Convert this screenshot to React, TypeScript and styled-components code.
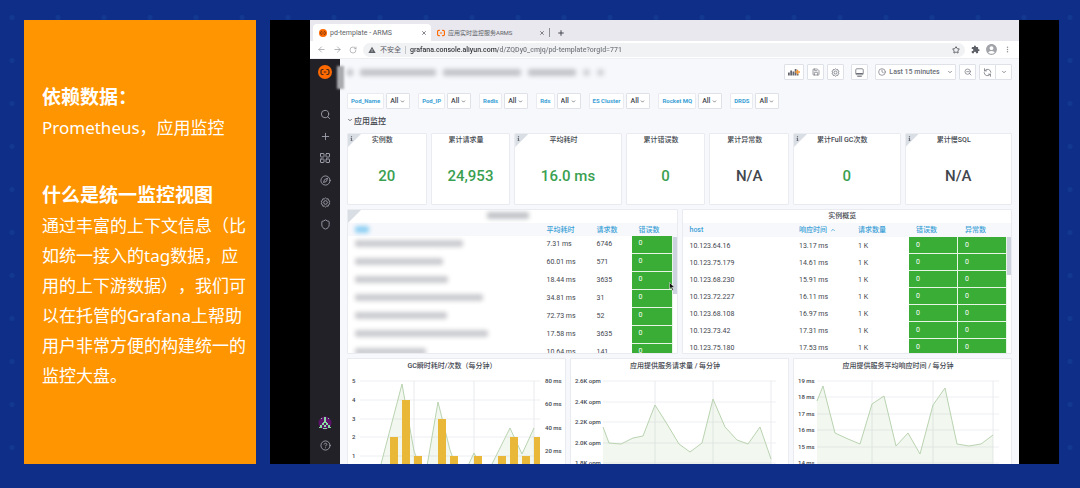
import React from "react";
import styled, { createGlobalStyle } from "styled-components";
import {
  ArrowLeft,
  ArrowRight,
  ChevronDown,
  ChevronUp,
  CircleHelp,
  Clock,
  Compass,
  LayoutGrid,
  Plus,
  RotateCw,
  Save,
  Search,
  Shield,
  Star,
  X,
  ZoomOut,
} from "lucide-react";
import { MdAccountCircle, MdExtension, MdMoreVert, MdWarning } from "react-icons/md";
import { FaInfo } from "react-icons/fa";

const sans = `Roboto, "Noto Sans CJK SC", sans-serif`;
const color = {
  navy: "#0f2e87",
  orange: "#ff9500",
  brand: "#ff6a00",
  ink: "#42464e",
  blue: "#3a9fd6",
  green: "#3aad37",
  stat: "#3a9f50",
  edge: "#e9ebf1",
  canvas: "#f7f8fc",
  side: "#222127",
};

const GlobalStyle = createGlobalStyle`
  *, *::before, *::after { box-sizing: border-box; }
  body { margin: 0; background: ${color.navy}; }
  button, input, select { font: inherit; color: inherit; margin: 0; }
  svg { display: block; flex: none; }
`;

const Page = styled.main`
  display: grid;
  grid-template-columns: 232px minmax(0, 1fr);
  gap: 14px;
  min-height: 100vh;
  padding: 20px 21px 24px 24px;
  background-color: ${color.navy};
  background-image: radial-gradient(circle at center, #12398f 0 2px, transparent 3px);
  background-size: 46px 43px;
  background-position: -11px -4px;
  font-family: ${sans};
`;

/* ---------- left note ---------- */

const Note = styled.aside`
  padding: 62px 6px 0 18px;
  background: ${color.orange};
  color: #fff;
  font-family: "Noto Sans", "Noto Sans CJK SC", sans-serif;
  text-spacing-trim: space-all;
`;

const NoteBlock = styled.section`
  & + & {
    margin-top: 37px;
  }
`;

const NoteTitle = styled.h2`
  margin: 0 0 1px;
  font-size: 19px;
  line-height: 30px;
  font-weight: 700;
`;

const NoteText = styled.p`
  margin: 0;
  font-size: 17px;
  line-height: 30px;
  font-weight: 400;
`;

/* ---------- browser ---------- */

const Stage = styled.section`
  padding: 0 40px;
  background: #000;
  overflow: hidden;
`;

const Browser = styled.div`
  display: flex;
  flex-direction: column;
  height: 100%;
  background: ${color.canvas};
  color: ${color.ink};
`;

const TabStrip = styled.div`
  display: flex;
  align-items: flex-end;
  height: 21px;
  padding-left: 3px;
  background: #e9e8ee;
`;

const Tab = styled.div<{ $active?: boolean }>`
  display: flex;
  align-items: center;
  gap: 3px;
  width: 118px;
  height: 17px;
  padding: 0 4px 0 6px;
  border-radius: 4px 4px 0 0;
  background: ${(p) => (p.$active ? "#fff" : "transparent")};
  color: #5c5f66;
`;

const TabLabel = styled.span<{ $large?: boolean }>`
  flex: 1;
  font-size: ${(p) => (p.$large ? 7 : 6)}px;
  white-space: nowrap;
`;

const Bare = styled.button`
  display: flex;
  align-items: center;
  justify-content: center;
  padding: 0;
  border: 0;
  background: none;
  cursor: pointer;
`;

const TabDivider = styled.span`
  align-self: center;
  width: 1px;
  height: 9px;
  margin-top: 4px;
  background: #8d8f96;
`;

const NewTab = styled(Bare)`
  width: 22px;
  height: 17px;
`;

const AddressRow = styled.div`
  display: flex;
  align-items: center;
  height: 18px;
  padding: 0 7px;
  background: #fff;
  border-bottom: 1px solid #eceef2;
`;

const NavButtons = styled.div`
  display: flex;
  gap: 7px;
  width: 46px;
  color: #9b9da2;
`;

const Omnibox = styled.div`
  display: flex;
  align-items: center;
  flex: 1;
  height: 14px;
  padding: 0 5px;
  border-radius: 7px;
  background: #f1f2f4;
  font-size: 7px;
  color: #5d6066;
`;

const Insecure = styled.span`
  display: flex;
  align-items: center;
  gap: 4px;
  padding-right: 4px;
  margin-right: 4px;
  border-right: 1px solid #c3c5ca;
  line-height: 8px;
`;

const UrlInput = styled.input`
  flex: 1;
  min-width: 0;
  padding: 0;
  border: 0;
  outline: 0;
  background: linear-gradient(90deg, #2f3135 88px, #74777d 88px);
  background-clip: text;
  -webkit-background-clip: text;
  -webkit-text-fill-color: transparent;
  font-weight: 500;
`;

const BrowserActions = styled.div`
  display: flex;
  align-items: center;
  gap: 5px;
  padding-left: 6px;
  color: #5d6066;
`;

/* ---------- dashboard shell ---------- */

const Dashboard = styled.div`
  display: flex;
  flex: 1;
  min-height: 0;
`;

const Sidebar = styled.nav`
  display: flex;
  flex-direction: column;
  align-items: center;
  width: 30px;
  padding: 6px 0 8px;
  background: ${color.side};
  color: #9d9fab;
`;

const SideGroup = styled.div<{ $push?: boolean }>`
  display: flex;
  flex-direction: column;
  margin-top: ${(p) => (p.$push ? "auto" : "24px")};
`;

const SideButton = styled(Bare)`
  width: 30px;
  height: 22px;
`;

const Main = styled.div`
  position: relative;
  flex: 1;
  min-width: 0;
  padding: 5px 7px 0;
`;

const Toolbar = styled.header`
  display: flex;
  align-items: center;
  height: 16px;
  margin-bottom: 13px;
`;

const Crumbs = styled.div`
  display: flex;
  align-items: center;
  gap: 7px;
  flex: 1;
`;

const Smudge = styled.span<{ $w: number; $tone?: string; $h?: number }>`
  display: block;
  width: ${(p) => p.$w}px;
  height: ${(p) => p.$h ?? 7}px;
  border-radius: 2px;
  background: ${(p) => p.$tone ?? "#c2c4c9"};
  filter: blur(2px);
`;

const EdgeSmudge = styled.span`
  position: absolute;
  left: -3px;
  top: 7px;
  width: 7px;
  height: 23px;
  background: #a9aaae;
  filter: blur(1px);
`;

const ToolGroup = styled.div`
  display: flex;
  gap: 3px;
`;

const ToolButton = styled(Bare)<{ $w?: number; $gap?: boolean; $joined?: boolean }>`
  gap: 3px;
  width: ${(p) => p.$w ?? 17}px;
  height: 16px;
  margin-left: ${(p) => (p.$gap ? 4 : p.$joined ? -4 : 0)}px;
  border: 1px solid #dfe1e8;
  border-radius: 1px;
  background: #fff;
  color: #6b6e76;
  font-size: 7px;
  font-weight: 500;
  white-space: nowrap;
`;

const ButtonText = styled.span`
  margin-right: 4px;
`;

const Variables = styled.div`
  display: flex;
  gap: 8px;
`;

const Variable = styled.label`
  display: flex;
  gap: 2px;
  height: 16px;
`;

const VariableName = styled.span`
  display: flex;
  align-items: center;
  padding: 0 3px 2px;
  border: 1px solid ${color.edge};
  border-radius: 1px;
  background: #fff;
  color: ${color.blue};
  font-size: 6px;
  font-weight: 700;
  white-space: nowrap;
`;

const Picker = styled.span`
  display: grid;
  align-items: center;
  width: 24px;
  border: 1px solid #dfe1e8;
  border-radius: 1px;
  background: #fff;

  & > * {
    grid-area: 1 / 1;
  }

  & > svg {
    justify-self: end;
    margin-right: 4px;
    pointer-events: none;
  }
`;

const Select = styled.select`
  appearance: none;
  width: 100%;
  height: 14px;
  padding: 0 0 0 3px;
  border: 0;
  background: transparent;
  font-size: 7px;
  font-weight: 500;
`;

const SectionToggle = styled(Bare)`
  gap: 1px;
  height: 24px;
  padding-bottom: 2px;
  font-size: 8px;
  font-weight: 500;
`;

const Board = styled.div`
  display: grid;
  grid-template-columns: repeat(24, minmax(0, 1fr));
  gap: 4px;
`;

const Panel = styled.section<{ $span: number; $h: number; $open?: boolean }>`
  position: relative;
  display: flex;
  flex-direction: column;
  grid-column: span ${(p) => p.$span};
  height: ${(p) => p.$h}px;
  border: 1px solid ${color.edge};
  border-bottom-width: ${(p) => (p.$open ? 0 : 1)}px;
  border-radius: 1px;
  background: #fff;
  overflow: hidden;
`;

const PanelTitle = styled.h3<{ $h?: number }>`
  display: flex;
  align-items: center;
  justify-content: center;
  flex: none;
  height: ${(p) => p.$h ?? 13}px;
  margin: 0;
  padding: 0 9px 2px 0;
  font-size: 7px;
  line-height: 8px;
  font-weight: 500;
  white-space: nowrap;
`;

const Corner = styled.span`
  position: absolute;
  left: 0;
  top: 0;
  width: 13px;
  height: 13px;
  padding: 2px 0 0 1px;
  background: #d9dee5;
  color: #6b6e76;
  clip-path: polygon(0 0, 100% 0, 0 100%);
`;

const StatValue = styled.div<{ $muted?: boolean }>`
  display: flex;
  align-items: center;
  justify-content: center;
  flex: 1;
  color: ${(p) => (p.$muted ? color.ink : color.stat)};
  font-size: 15px;
  font-weight: 500;
`;

const TableArea = styled.div`
  display: flex;
`;

const DataTable = styled.table<{ $row: number; $head: number; $lift?: number }>`
  flex: 1;
  min-width: 0;
  table-layout: fixed;
  border-collapse: separate;
  border-spacing: 0;
  font-size: 7px;
  line-height: 8px;

  th,
  td {
    padding: 0 0 0 7px;
    text-align: left;
    white-space: nowrap;
  }

  th {
    height: ${(p) => p.$head}px;
    background: ${color.canvas};
    color: ${color.blue};
    font-weight: 500;
  }

  td {
    height: ${(p) => p.$row}px;
    padding-bottom: ${(p) => p.$lift ?? 0}px;
  }
`;

const GreenCell = styled.td`
  border-bottom: 1px solid #e6f5e5;
  border-right: 1px solid #e6f5e5;
  background: ${color.green};
  color: #fff;
`;

const HeadLabel = styled.span`
  display: flex;
  align-items: center;
  gap: 3px;
`;

const Track = styled.div<{ $head: number }>`
  width: 4px;
  border-top: ${(p) => p.$head}px solid ${color.canvas};
`;

const Thumb = styled.div<{ $h: number }>`
  height: ${(p) => p.$h}px;
  background: #cdd2df;
`;

const Pointer = styled.svg`
  position: absolute;
  right: 2px;
  top: 72px;
`;

const ChartSvg = styled.svg`
  width: 100%;
  height: 90px;
  font-family: ${sans};
  font-size: 6px;
  font-weight: 500;
  fill: ${color.ink};
`;

/* ---------- drawings ---------- */

function BracketMark({ size, disc }: { size: number; disc?: boolean }) {
  const ink = disc ? "#3a2418" : color.brand;
  return (
    <svg width={size} height={size} viewBox="0 0 28 28" fill="none" stroke={ink} strokeWidth={disc ? 2.4 : 4}>
      {disc && <circle cx="14" cy="14" r="14" fill={color.brand} stroke="none" />}
      {disc ? (
        <path d="M11 9H9Q6 9 6 12V16Q6 19 9 19H11M17 9H19Q22 9 22 12V16Q22 19 19 19H17M11.500 14H16.500" />
      ) : (
        <path d="M10 5H6Q2 5 2 9V19Q2 23 6 23H10M18 5H22Q26 5 26 9V19Q26 23 22 23H18M10 14H18" />
      )}
    </svg>
  );
}

function GearIcon({ size }: { size: number }) {
  return (
    <svg width={size} height={size} viewBox="0 0 24 24" fill="none" stroke="currentColor" strokeWidth="2">
      <path
        strokeLinejoin="round"
        d="M9.500 4.200 12 2l2.500 2.200 3.300-.3.700 3.300 2.900 1.700L20 12l1.400 3.100-2.900 1.700-.7 3.300-3.300-.3L12 22l-2.500-2.200-3.300.3-.7-3.300-2.900-1.700L4 12 2.600 8.900l2.900-1.700.7-3.300z"
      />
      <circle cx="12" cy="12" r="4" />
    </svg>
  );
}

function AddPanelIcon() {
  return (
    <svg width="12" height="8" viewBox="0 0 24 16">
      <path fill="#63666e" d="M0 9h3.500v6H0zM4.500 5H8v10H4.500zM9 7h3.500v8H9zM13.500 2H17v13h-3.500zM18 11h3v4h-3z" />
      <path fill="#f59a3c" d="M17.500 3.500h3V6.500H24v3h-3.500V12.500h-3V9.500H14.500v-3h3z" />
    </svg>
  );
}

function DisplayIcon() {
  return (
    <svg width="9" height="9" viewBox="0 0 24 24" fill="none" stroke="currentColor" strokeWidth="2">
      <rect x="2" y="2" width="20" height="16" rx="3" />
      <path d="M3 14.500H21M6 22H18" strokeWidth="3" />
    </svg>
  );
}

function SyncIcon() {
  return (
    <svg width="9" height="9" viewBox="0 0 24 24" fill="none" stroke="currentColor" strokeWidth="2" strokeLinecap="round" strokeLinejoin="round">
      <path d="M4 2v5.500h5.500M4.500 7.500A9 9 0 0 1 21 11.500M20 22v-5.500h-5.500M19.500 16.500A9 9 0 0 1 3 12.500" />
    </svg>
  );
}

function AvatarIcon() {
  return (
    <svg width="14" height="14" viewBox="0 0 14 14">
      <circle cx="7" cy="7" r="6.500" fill="#5f1269" />
      <path
        fill="#86dca0"
        d="M6 1h2v5H6zM3 2h1v1H3zM10 2h1v1h-1zM5 6h4v1H5zM4 7h2v2H4zM8 7h2v2H8zM2 9h2v2H2zM10 9h2v2h-2zM6 9h2v2H6zM1 11h3v1H1zM10 11h3v1h-3zM5 12h4v1H5z"
      />
    </svg>
  );
}

/* ---------- data ---------- */

const variables = ["Pod_Name", "Pod_IP", "Redis", "Rds", "ES Cluster", "Rocket MQ", "DRDS"];

const stats = [
  { title: "实例数", value: "20", span: 3, info: true },
  { title: "累计请求量", value: "24,953", span: 3 },
  { title: "平均耗时", value: "16.0 ms", span: 4, info: true },
  { title: "累计错误数", value: "0", span: 3 },
  { title: "累计异常数", value: "N/A", span: 3 },
  { title: "累计Full GC次数", value: "0", span: 4, info: true },
  { title: "累计慢SQL", value: "N/A", span: 4, info: true },
];

const services = [
  { name: 108, cost: "7.31 ms", count: "6746" },
  { name: 88, cost: "60.01 ms", count: "571" },
  { name: 93, cost: "18.44 ms", count: "3635" },
  { name: 128, cost: "34.81 ms", count: "31" },
  { name: 92, cost: "72.73 ms", count: "52" },
  { name: 133, cost: "17.58 ms", count: "3635" },
  { name: 71, cost: "10.64 ms", count: "141" },
];

const hosts = [
  ["10.123.64.16", "13.17 ms"],
  ["10.123.75.179", "14.61 ms"],
  ["10.123.68.230", "15.91 ms"],
  ["10.123.72.227", "16.11 ms"],
  ["10.123.68.108", "16.97 ms"],
  ["10.123.73.42", "17.31 ms"],
  ["10.123.75.180", "17.53 ms"],
];

type Tick = [number, string];

interface ChartProps {
  title: string;
  left: Tick[];
  right?: Tick[];
  from: number;
  to: number;
  verticals: number[];
  points: [number, number][];
  bars?: [number, number][];
}

const charts: ChartProps[] = [
  {
    title: "GC瞬时耗时/次数（每分钟）",
    left: [[7, "5"], [26, "4"], [45, "3"], [63, "2"], [82, "1"]],
    right: [[7, "80 ms"], [30, "60 ms"], [54, "40 ms"], [77, "20 ms"]],
    from: 12,
    to: 192,
    verticals: [66, 126, 186],
    points: [[32, 94], [54, 10], [66, 77], [74, 98], [78, 98], [90, 28], [102, 76], [110, 98], [117, 98], [126, 79], [136, 98], [140, 98], [162, 54], [174, 80], [186, 54]],
    bars: [[42, 63], [54, 26], [66, 82], [90, 45], [102, 82], [126, 82], [150, 82], [162, 63], [174, 82], [186, 63]],
  },
  {
    title: "应用提供服务请求量 / 每分钟",
    left: [[7, "2.6K opm"], [28, "2.4K opm"], [48, "2.2K opm"], [69, "2.0K opm"], [89, "1.8K opm"]],
    from: 32,
    to: 205,
    verticals: [84, 142, 200],
    points: [[32, 53], [38, 69], [50, 70], [62, 64], [72, 62], [84, 31], [96, 50], [108, 70], [119, 78], [131, 69], [142, 25], [154, 53], [166, 66], [177, 70], [189, 53], [200, 85]],
  },
  {
    title: "应用提供服务平均响应时间 / 每分钟",
    left: [[7, "19 ms"], [23, "18 ms"], [40, "17 ms"], [56, "16 ms"], [73, "15 ms"], [89, "14 ms"]],
    from: 23,
    to: 205,
    verticals: [78, 139, 199],
    points: [[23, 27], [29, 12], [41, 59], [54, 65], [66, 70], [78, 30], [90, 22], [102, 72], [114, 59], [126, 80], [139, 31], [151, 14], [163, 70], [175, 72], [187, 70], [199, 61]],
  },
];

function Chart({ title, left, right = [], from, to, verticals, points, bars = [] }: ChartProps) {
  const line = points.map((p) => p.join(",")).join(" ");
  const first = points[0][0];
  const last = points[points.length - 1][0];
  return (
    <Panel $span={8} $h={106} $open>
      <PanelTitle $h={15}>{title}</PanelTitle>
      <ChartSvg viewBox="0 0 217 90" preserveAspectRatio="xMinYMin meet">
        {left.map(([y, label]) => (
          <React.Fragment key={label}>
            <line x1={from} x2={to} y1={y} y2={y} stroke="#eeeff2" />
            <text x="4" y={y + 2}>{label}</text>
          </React.Fragment>
        ))}
        {verticals.map((x) => (
          <line key={x} x1={x} x2={x} y1="7" y2="100" stroke="#e9eaee" />
        ))}
        <polygon points={`${first},110 ${line} ${last},110`} fill="#7eb26d" fillOpacity="0.1" />
        <polyline points={line} fill="none" stroke="#b9d3b0" strokeWidth="1" />
        {bars.map(([x, y]) => (
          <rect key={x} x={x} y={y} width={Math.min(8, to - x)} height={110 - y} fill="#eab839" />
        ))}
        {right.map(([y, label]) => (
          <text key={label} x="197" y={y + 2}>{label}</text>
        ))}
      </ChartSvg>
    </Panel>
  );
}

export default function App() {
  return (
    <>
      <GlobalStyle />
      <Page>
        <Note>
          <NoteBlock>
            <NoteTitle>依赖数据：</NoteTitle>
            <NoteText>Prometheus，应用监控</NoteText>
          </NoteBlock>
          <NoteBlock>
            <NoteTitle>什么是统一监控视图</NoteTitle>
            <NoteText>
              通过丰富的上下文信息（比如统一接入的tag数据，应用的上下游数据），我们可以在托管的Grafana上帮助用户非常方便的构建统一的监控大盘。
            </NoteText>
          </NoteBlock>
        </Note>

        <Stage>
          <Browser>
            <TabStrip>
              <Tab $active>
                <BracketMark size={8} disc />
                <TabLabel $large>pd-template - ARMS</TabLabel>
                <Bare aria-label="关闭标签页"><X size={6} strokeWidth={3} /></Bare>
              </Tab>
              <Tab>
                <BracketMark size={8} />
                <TabLabel>应用实时监控服务ARMS</TabLabel>
                <Bare aria-label="关闭标签页"><X size={6} strokeWidth={3} /></Bare>
              </Tab>
              <TabDivider />
              <NewTab aria-label="新标签页"><Plus size={8} strokeWidth={3} /></NewTab>
            </TabStrip>

            <AddressRow>
              <NavButtons>
                <Bare aria-label="后退"><ArrowLeft size={9} /></Bare>
                <Bare aria-label="前进"><ArrowRight size={9} /></Bare>
                <Bare aria-label="重新加载"><RotateCw size={8} /></Bare>
              </NavButtons>
              <Omnibox>
                <Insecure><MdWarning size={8} />不安全</Insecure>
                <UrlInput
                  aria-label="地址"
                  defaultValue="grafana.console.aliyun.com/d/ZQDy0_cmjq/pd-template?orgId=771"
                />
                <Bare aria-label="收藏"><Star size={8} strokeWidth={3} /></Bare>
              </Omnibox>
              <BrowserActions>
                <Bare aria-label="扩展程序"><MdExtension size={9} /></Bare>
                <Bare aria-label="账户"><MdAccountCircle size={13} color="#a2a4a9" /></Bare>
                <Bare aria-label="更多"><MdMoreVert size={9} color="#8f9196" /></Bare>
              </BrowserActions>
            </AddressRow>

            <Dashboard>
              <Sidebar>
                <BracketMark size={14} disc />
                <SideGroup>
                  <SideButton aria-label="搜索"><Search size={11} /></SideButton>
                  <SideButton aria-label="新建"><Plus size={11} /></SideButton>
                  <SideButton aria-label="仪表盘"><LayoutGrid size={12} /></SideButton>
                  <SideButton aria-label="探索"><Compass size={11} /></SideButton>
                  <SideButton aria-label="配置"><GearIcon size={11} /></SideButton>
                  <SideButton aria-label="管理"><Shield size={11} /></SideButton>
                </SideGroup>
                <SideGroup $push>
                  <SideButton aria-label="个人资料"><AvatarIcon /></SideButton>
                  <SideButton aria-label="帮助"><CircleHelp size={11} /></SideButton>
                </SideGroup>
              </Sidebar>

              <Main>
                <EdgeSmudge />
                <Toolbar>
                  <Crumbs>
                    <Smudge $w={6} />
                    <Smudge $w={76} />
                    <Smudge $w={78} />
                    <Smudge $w={48} />
                    <Smudge $w={7} $tone="#d2d4d9" />
                    <Smudge $w={7} $tone="#d2d4d9" />
                  </Crumbs>
                  <ToolGroup>
                    <ToolButton $w={20} aria-label="添加面板"><AddPanelIcon /></ToolButton>
                    <ToolButton aria-label="保存"><Save size={8} /></ToolButton>
                    <ToolButton aria-label="设置"><GearIcon size={9} /></ToolButton>
                    <ToolButton $gap aria-label="视图模式"><DisplayIcon /></ToolButton>
                    <ToolButton $w={81} $gap>
                      <Clock size={8} />
                      <ButtonText>Last 15 minutes</ButtonText>
                      <ChevronDown size={6} strokeWidth={3} />
                    </ToolButton>
                    <ToolButton aria-label="缩小"><ZoomOut size={8} /></ToolButton>
                    <ToolButton aria-label="刷新"><SyncIcon /></ToolButton>
                    <ToolButton $joined aria-label="刷新间隔"><ChevronDown size={6} strokeWidth={3} /></ToolButton>
                  </ToolGroup>
                </Toolbar>

                <Variables>
                  {variables.map((name) => (
                    <Variable key={name}>
                      <VariableName>{name}</VariableName>
                      <Picker>
                        <Select defaultValue="All">
                          <option>All</option>
                        </Select>
                        <ChevronDown size={5} strokeWidth={3} />
                      </Picker>
                    </Variable>
                  ))}
                </Variables>

                <SectionToggle aria-expanded="true">
                  <ChevronDown size={6} strokeWidth={3} />
                  应用监控
                </SectionToggle>

                <Board>
                  {stats.map((s) => (
                    <Panel key={s.title} $span={s.span} $h={72}>
                      {s.info && <Corner><FaInfo size={5} /></Corner>}
                      <PanelTitle>{s.title}</PanelTitle>
                      <StatValue $muted={s.value === "N/A"}>{s.value}</StatValue>
                    </Panel>
                  ))}

                  <Panel $span={12} $h={145}>
                    <Corner />
                    <PanelTitle><Smudge $w={42} /></PanelTitle>
                    <TableArea>
                      <DataTable $row={18} $head={13} $lift={3}>
                        <colgroup>
                          <col />
                          <col width="50" />
                          <col width="42" />
                          <col width="41" />
                        </colgroup>
                        <thead>
                          <tr>
                            <th><Smudge $w={14} $tone="#8fd0f3" /></th>
                            <th>平均耗时</th>
                            <th>请求数</th>
                            <th>错误数</th>
                          </tr>
                        </thead>
                        <tbody>
                          {services.map((s) => (
                            <tr key={s.cost}>
                              <td><Smudge $w={s.name} $tone="#cbccd0" /></td>
                              <td>{s.cost}</td>
                              <td>{s.count}</td>
                              <GreenCell>0</GreenCell>
                            </tr>
                          ))}
                        </tbody>
                      </DataTable>
                      <Track $head={14}><Thumb $h={57} /></Track>
                    </TableArea>
                    <Pointer width="6" height="9" viewBox="0 0 12 18">
                      <path d="M1 1v13l3-3 2.500 6 2.500-1-2.500-5.500H11z" fill="#111" stroke="#fff" strokeWidth="1" />
                    </Pointer>
                  </Panel>

                  <Panel $span={12} $h={145}>
                    <PanelTitle>实例概览</PanelTitle>
                    <TableArea>
                      <DataTable $row={17} $head={14}>
                        <colgroup>
                          <col />
                          <col width="59" />
                          <col width="58" />
                          <col width="49" />
                          <col width="49" />
                        </colgroup>
                        <thead>
                          <tr>
                            <th>host</th>
                            <th><HeadLabel>响应时间<ChevronUp size={6} strokeWidth={3} /></HeadLabel></th>
                            <th>请求数量</th>
                            <th>错误数</th>
                            <th>异常数</th>
                          </tr>
                        </thead>
                        <tbody>
                          {hosts.map(([host, time]) => (
                            <tr key={host}>
                              <td>{host}</td>
                              <td>{time}</td>
                              <td>1 K</td>
                              <GreenCell>0</GreenCell>
                              <GreenCell>0</GreenCell>
                            </tr>
                          ))}
                        </tbody>
                      </DataTable>
                      <Track $head={14}><Thumb $h={38} /></Track>
                    </TableArea>
                  </Panel>

                  {charts.map((c) => (
                    <Chart key={c.title} {...c} />
                  ))}
                </Board>
              </Main>
            </Dashboard>
          </Browser>
        </Stage>
      </Page>
    </>
  );
}
